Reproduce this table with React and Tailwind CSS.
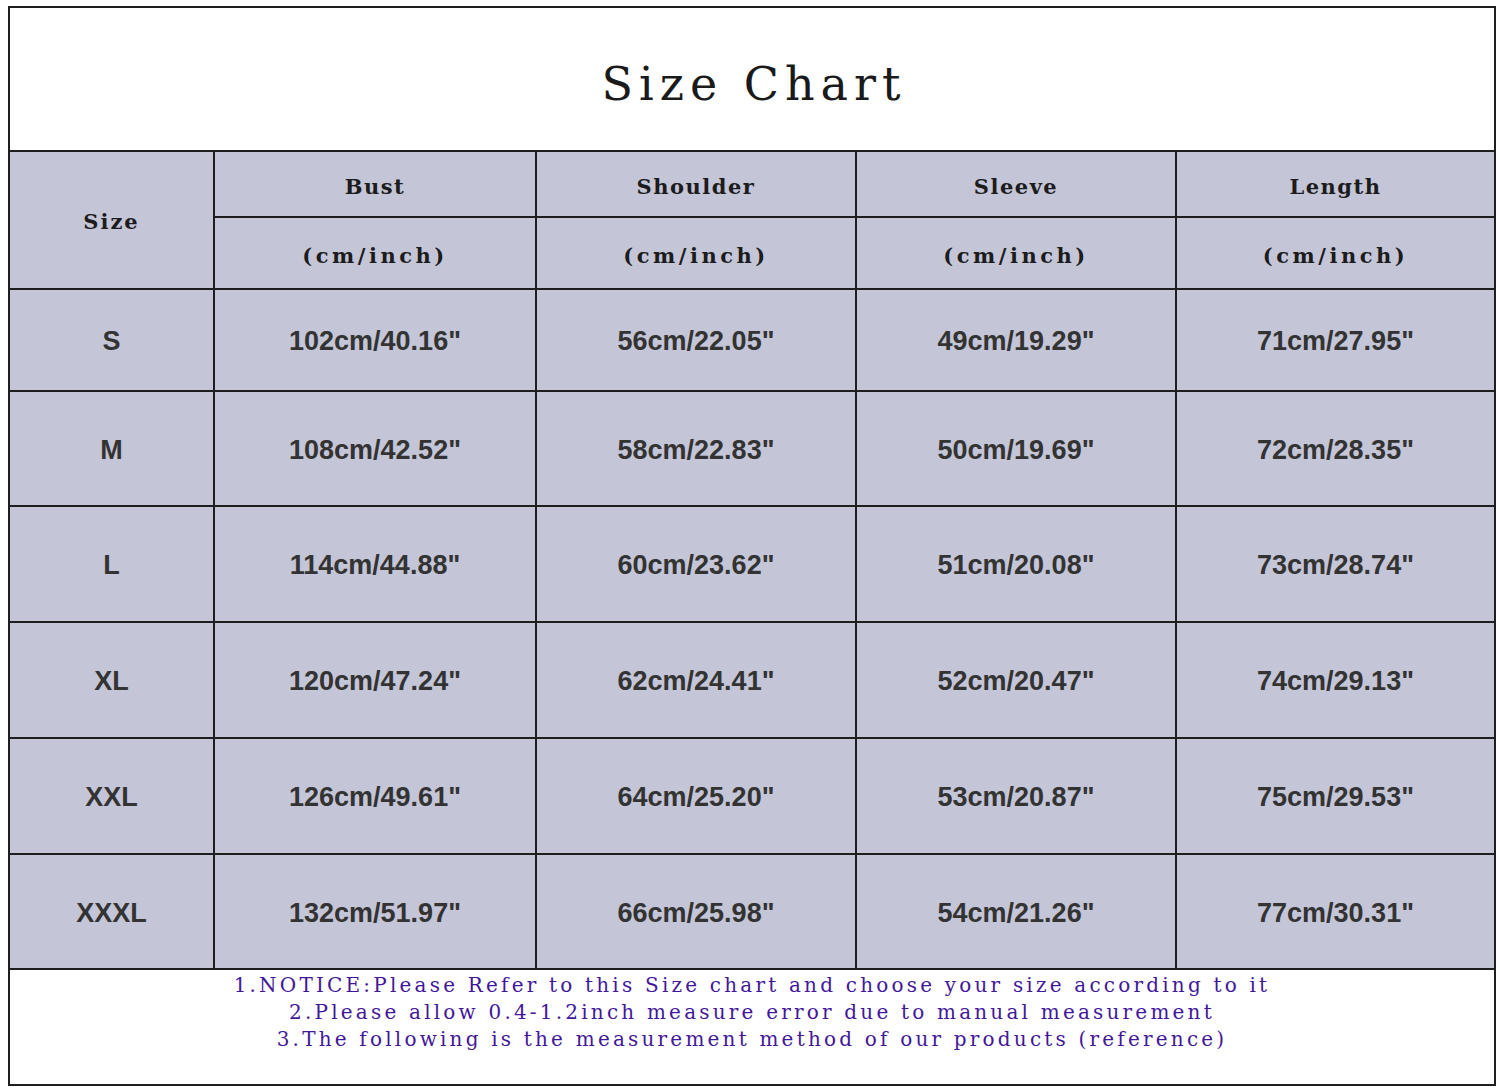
const rows = [
  ["S", "102cm/40.16\"", "56cm/22.05\"", "49cm/19.29\"", "71cm/27.95\""],
  ["M", "108cm/42.52\"", "58cm/22.83\"", "50cm/19.69\"", "72cm/28.35\""],
  ["L", "114cm/44.88\"", "60cm/23.62\"", "51cm/20.08\"", "73cm/28.74\""],
  ["XL", "120cm/47.24\"", "62cm/24.41\"", "52cm/20.47\"", "74cm/29.13\""],
  ["XXL", "126cm/49.61\"", "64cm/25.20\"", "53cm/20.87\"", "75cm/29.53\""],
  ["XXXL", "132cm/51.97\"", "66cm/25.98\"", "54cm/21.26\"", "77cm/30.31\""],
];

const rowHeights = ["h-[100px]", "h-[113px]", "h-[114px]", "h-[114px]", "h-[114px]", "h-[113px]"];

const headers = ["Bust", "Shoulder", "Sleeve", "Length"];

const serif = "font-['DejaVu_Serif','Liberation_Serif',serif]";
const sans = "font-['Liberation_Sans',Arial,sans-serif]";

function HeaderCell({ children, className = "" }) {
  return (
    <div className={`flex items-center justify-center bg-[#c5c5d8] text-[21px] font-bold text-[#1c1c1c] ${serif} ${className}`}>
      {children}
    </div>
  );
}

export default function App() {
  return (
    <div className="min-h-[1092px] w-[1500px] bg-white pt-[6px] pl-[8px]">
      <div className="w-[1488px] border-2 border-[#1e1e1e]">
        <div className="flex h-[142px] items-center justify-center pt-[10px] pl-[4px]">
          <h1 className={`text-[46px] leading-none tracking-[6px] text-[#1a1a1a] ${serif}`}>Size Chart</h1>
        </div>

        <div className="grid grid-cols-[203px_320px_318px_318px_317px] gap-[2px] border-y-2 border-[#1e1e1e] bg-[#1e1e1e]">
          <HeaderCell className="row-span-2 pt-[4px] tracking-[2px]">Size</HeaderCell>
          {headers.map((h) => (
            <HeaderCell key={h} className="h-[64px] pt-[6px] tracking-[1.5px]">
              {h}
            </HeaderCell>
          ))}
          {headers.map((h) => (
            <HeaderCell key={h + "-unit"} className="h-[70px] pt-[5px] tracking-[3.5px]">
              (cm/inch)
            </HeaderCell>
          ))}

          {rows.map((row, i) =>
            row.map((cell, j) => (
              <div
                key={`${i}-${j}`}
                className={`flex items-center justify-center bg-[#c5c5d8] pt-[3px] text-[27px] font-bold text-[#333] ${sans} ${rowHeights[i]}`}
              >
                {cell}
              </div>
            ))
          )}
        </div>

        <div className={`flex h-[114px] flex-col items-center pt-[2px] text-[20px] font-medium leading-[27px] tracking-[3.2px] text-[#43179a] ${serif}`}>
          <p>1.NOTICE:Please Refer to this Size chart and choose your size according to it</p>
          <p>2.Please allow 0.4-1.2inch measure error due to manual measurement</p>
          <p>3.The following is the measurement method of our products (reference)</p>
        </div>
      </div>
    </div>
  );
}
